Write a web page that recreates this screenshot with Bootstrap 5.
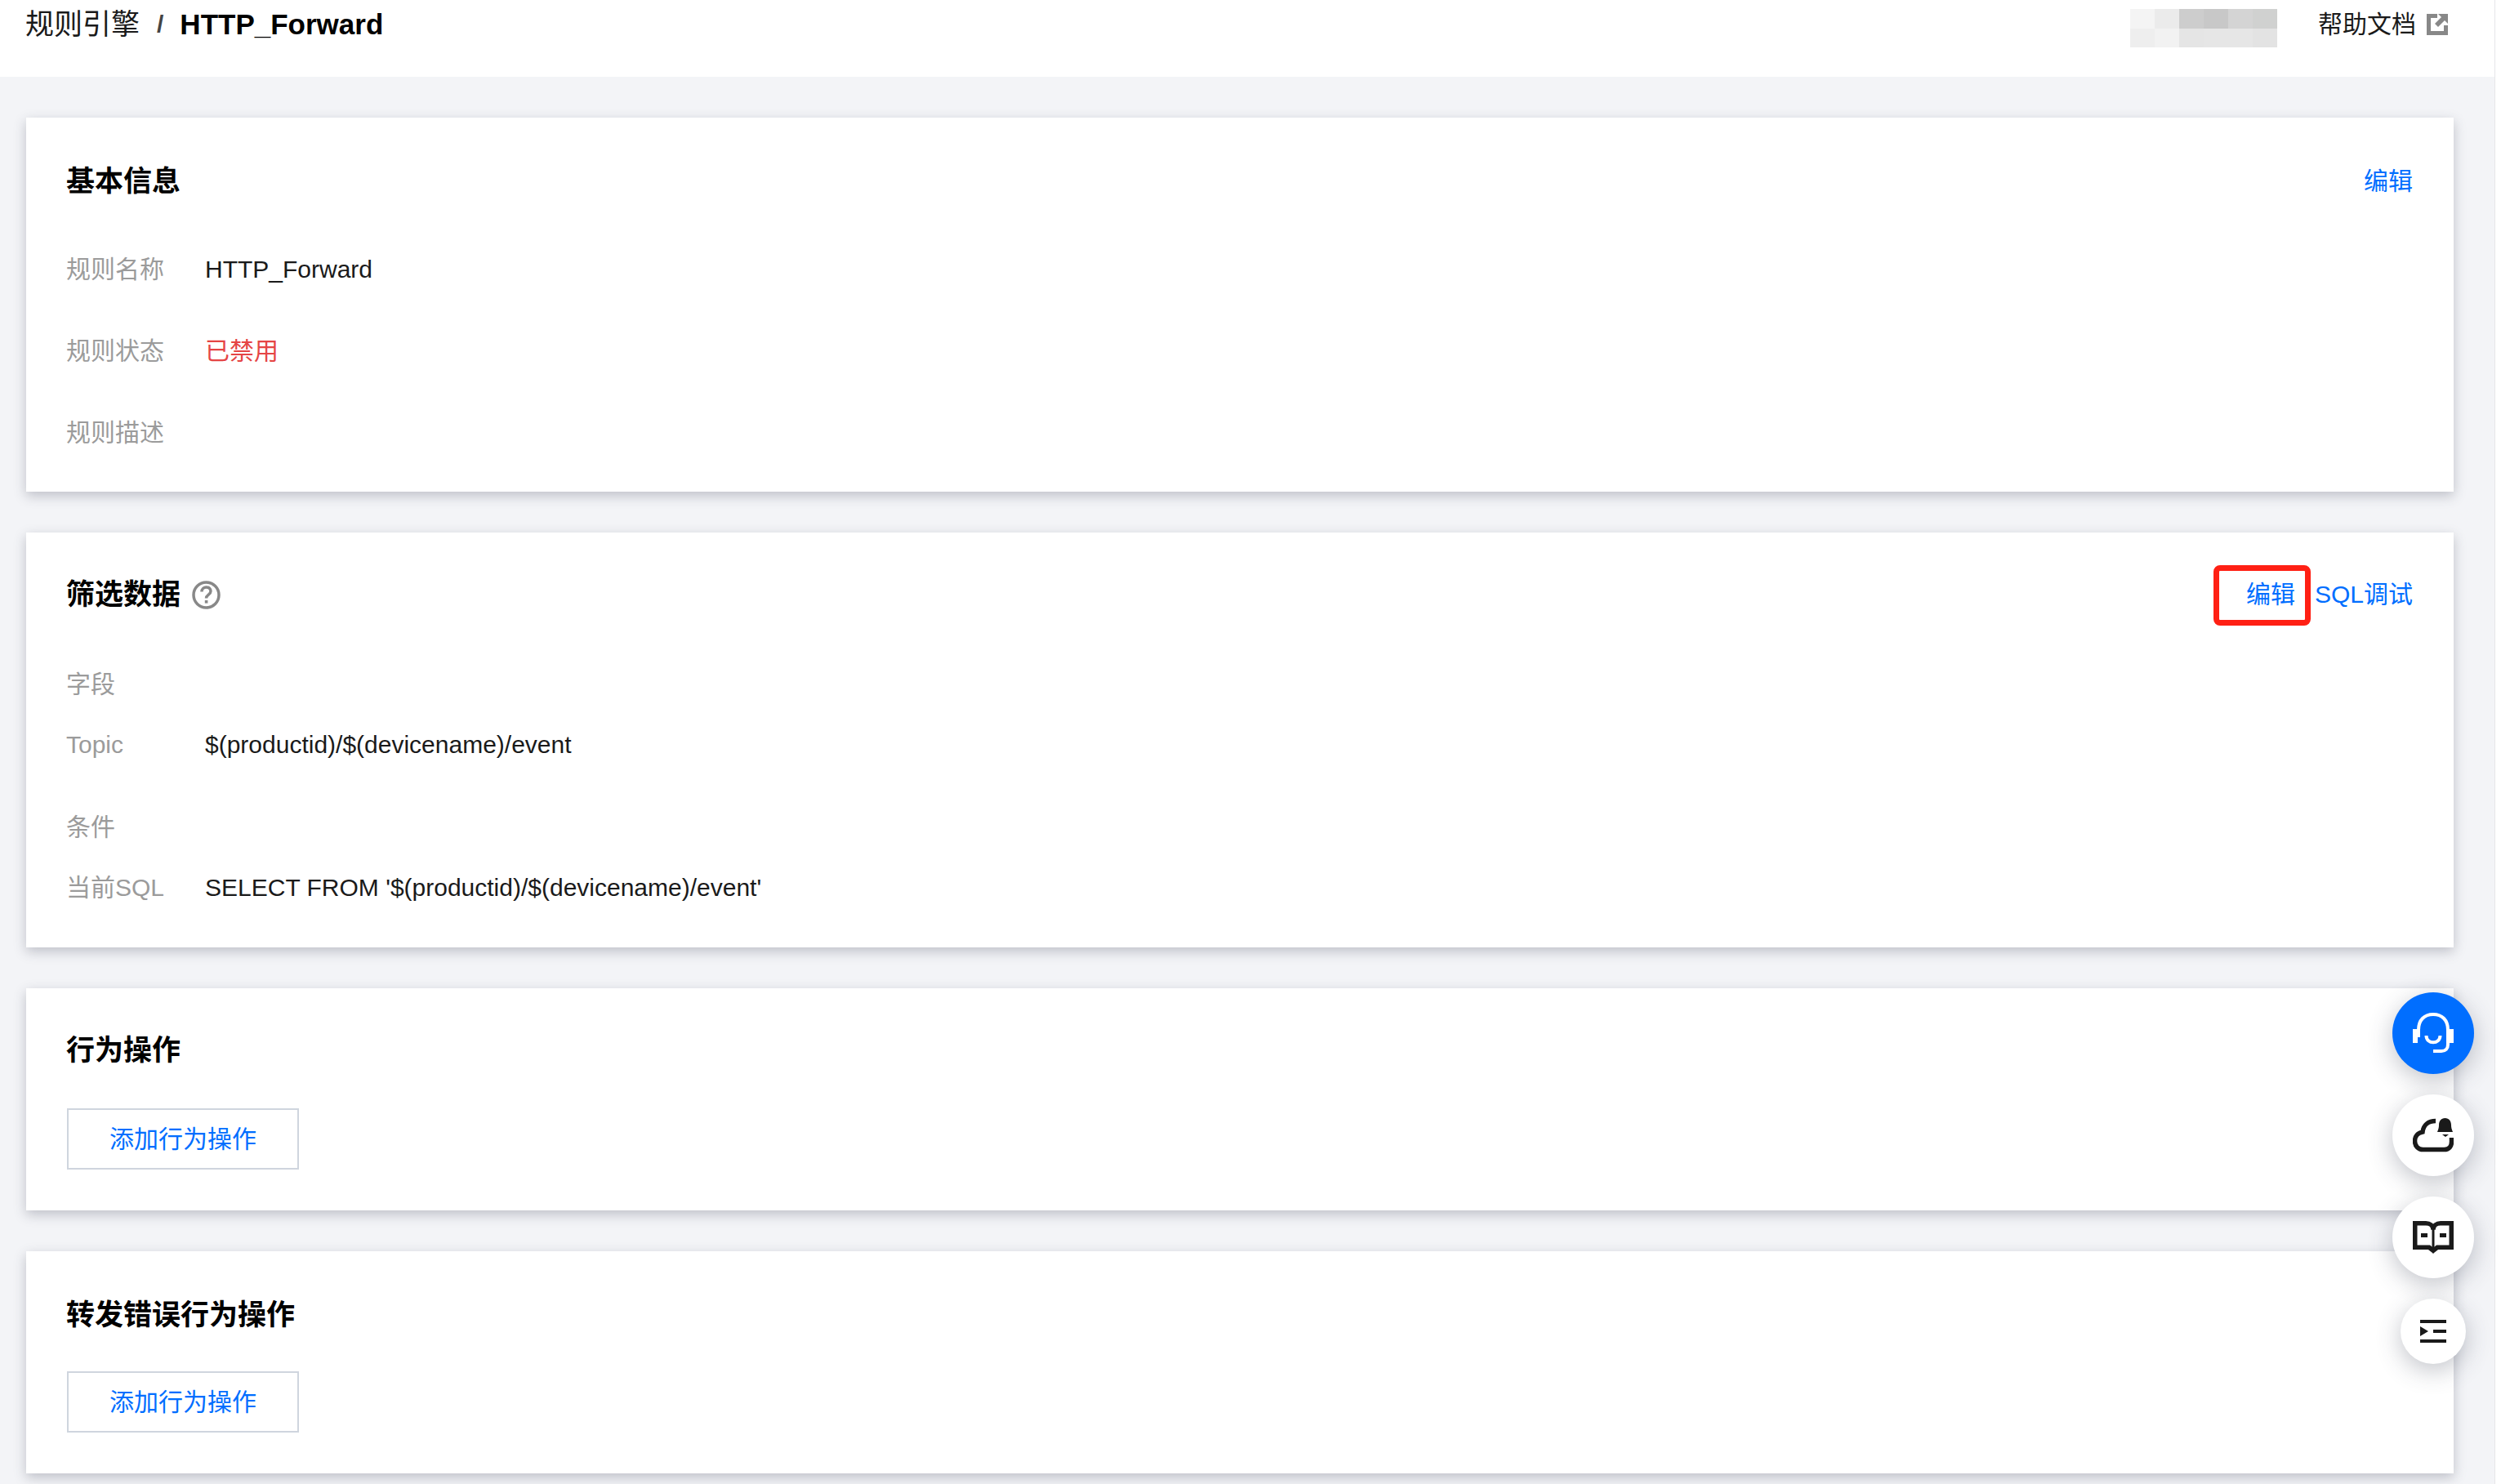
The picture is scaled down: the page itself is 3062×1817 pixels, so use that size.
<!DOCTYPE html>
<html lang="zh-CN">
<head>
<meta charset="utf-8">
<title>规则引擎</title>
<link rel="stylesheet" href="https://cdn.jsdelivr.net/npm/bootstrap@5.3.0/dist/css/bootstrap.min.css">
<style>
html,body{height:100%;overflow:hidden}
body{font-family:"Liberation Sans","Noto Sans CJK SC",sans-serif;font-size:30px;line-height:50px;color:#1a1a1a;background:#fff}
a{text-decoration:none}
.shell{width:3055px;height:1817px;background:#f3f4f7;border-right:1px solid #e6e6e9;overflow:hidden}
.topbar{height:94px;background:#fff;padding:5px 57px 0 31px;align-items:flex-start}
.topbar .breadcrumb{--bs-breadcrumb-margin-bottom:0;--bs-breadcrumb-item-padding-x:20px;--bs-breadcrumb-divider-color:#444;--bs-breadcrumb-item-active-color:#000;font-size:35px;line-height:50px}
.topbar .breadcrumb-item a{color:#1a1a1a}
.topbar .breadcrumb-item.active{font-weight:700;margin-left:1px}
.topbar .breadcrumb-item+.breadcrumb-item::before{font-size:30px}
.mosaic{display:grid;grid-template-columns:repeat(6,30px);grid-auto-rows:23.5px;margin:6px 50px 0 0}
.m1{background:#f4f4f4}.m2{background:#ebebeb}.m3{background:#cdcdcd}.m4{background:#c8c8c8}.m5{background:#d4d4d4}.m6{background:#d0d1d0}
.m7{background:#eee}.m8{background:#f2f2f2}.m9{background:#e5e5e5}.m10{background:#e6e6e6}.m11{background:#e3e3e3}
.helplink{color:#1a1a1a;gap:13px}
.extico{width:26px;height:26px}
.content{padding:50px 50px 0 32px;gap:50px}
.panel.card{--bs-card-border-width:0;--bs-card-border-radius:0;--bs-card-inner-border-radius:0;box-shadow:0 5px 14px rgba(54,58,80,.28);padding:52px 50px 47px}
.panel.card.flt{padding:50px 50px 48px}
.panel-head{height:52px;line-height:52px}
.panel-title{font-size:35px;line-height:52px;font-weight:700;color:#000;margin:0 0 0 -1px}
.tip{width:35px;height:35px;margin-left:14px}
.lnk{color:#006eff}
.info{margin-top:57px;gap:50px}
.info2{margin-top:59px}
.rowline{height:50px}
.lab{width:170px;margin-left:-1px;color:#9b9b9b;flex:none}
.val{color:#1a1a1a}
.off{color:#e54545}
.g24{margin-top:24px}.g25{margin-top:25px}.g51{margin-top:51px}
.act.panel.card{padding-bottom:50px}
.act.first.panel.card{padding-top:50px}
.addbtn.btn{--bs-btn-border-radius:0;--bs-btn-border-width:2px;--bs-btn-border-color:#cfd5de;--bs-btn-color:#006eff;--bs-btn-bg:#fff;--bs-btn-hover-bg:#fff;--bs-btn-hover-color:#006eff;--bs-btn-hover-border-color:#cfd5de;--bs-btn-font-size:30px;--bs-btn-line-height:71px;--bs-btn-padding-x:0;--bs-btn-padding-y:0;width:284px;height:75px;margin-top:43px;display:block}
.first .addbtn.btn{margin-top:45px}
.anchor{position:relative}
.redbox{position:absolute;left:-40px;top:-10px;width:119px;height:74px;border:7px solid #ff2014;border-radius:8px;pointer-events:none}
.floats{position:fixed;left:2929px;top:1215px;width:100px;gap:25px;align-items:center}
.fbtn{width:100px;height:100px;border-radius:50%;background:#fff;box-shadow:0 8px 30px rgba(54,58,80,.3);display:flex;align-items:center;justify-content:center;color:#1a1a1a}
.fbtn.pri{background:#006eff;color:#fff}
.fbtn.sm{width:80px;height:80px}
.fbtn svg{width:50px;height:50px}
</style>
</head>
<body>
<div class="shell">
  <header class="topbar d-flex justify-content-between">
    <nav aria-label="breadcrumb">
      <ol class="breadcrumb">
        <li class="breadcrumb-item"><a href="#">规则引擎</a></li>
        <li class="breadcrumb-item active" aria-current="page">HTTP_Forward</li>
      </ol>
    </nav>
    <div class="d-flex align-items-start">
      <div class="mosaic" aria-hidden="true">
        <i class="m1"></i><i class="m2"></i><i class="m3"></i><i class="m4"></i><i class="m5"></i><i class="m6"></i>
        <i class="m7"></i><i class="m8"></i><i class="m9"></i><i class="m10"></i><i class="m10"></i><i class="m11"></i>
      </div>
      <a class="helplink d-flex align-items-center" href="#">帮助文档
        <svg class="extico" viewBox="0 0 26 26"><path fill="none" stroke="#888" stroke-width="5" d="M13 2.5H2.5v21h21V14"/><path fill="#888" d="M14 0h12v12l-4-4-8 8-4-4 8-8z"/></svg>
      </a>
    </div>
  </header>

  <main class="content d-flex flex-column">
    <section class="panel card">
      <div class="panel-head d-flex justify-content-between align-items-center">
        <h2 class="panel-title">基本信息</h2>
        <a class="lnk" href="#">编辑</a>
      </div>
      <div class="info d-flex flex-column">
        <div class="rowline d-flex"><span class="lab">规则名称</span><span class="val">HTTP_Forward</span></div>
        <div class="rowline d-flex"><span class="lab">规则状态</span><span class="off">已禁用</span></div>
        <div class="rowline d-flex"><span class="lab">规则描述</span></div>
      </div>
    </section>

    <section class="panel card flt">
      <div class="panel-head d-flex justify-content-between align-items-center">
        <div class="d-flex align-items-center">
          <h2 class="panel-title">筛选数据</h2>
          <svg class="tip" viewBox="0 0 35 35"><circle cx="17.5" cy="17.5" r="15.5" fill="none" stroke="#888" stroke-width="3.5"/><path fill="none" stroke="#888" stroke-width="3.5" d="M12 13.5c0-3.4 2.4-5.5 5.6-5.5s5.4 2 5.4 4.8c0 4.4-5.5 4.2-5.5 8.7"/><rect x="15.8" y="24" width="3.6" height="3.6" fill="#888"/></svg>
        </div>
        <div class="d-flex align-items-center">
          <a class="lnk anchor" href="#">编辑<span class="redbox"></span></a>
          <a class="lnk ms-4" href="#">SQL调试</a>
        </div>
      </div>
      <div class="info2">
        <div class="rowline d-flex"><span class="lab">字段</span></div>
        <div class="rowline d-flex g24"><span class="lab">Topic</span><span class="val">$(productid)/$(devicename)/event</span></div>
        <div class="rowline d-flex g51"><span class="lab">条件</span></div>
        <div class="rowline d-flex g24"><span class="lab">当前SQL</span><span class="val">SELECT FROM '$(productid)/$(devicename)/event'</span></div>
      </div>
    </section>

    <section class="panel card act first">
      <div class="panel-head"><h2 class="panel-title">行为操作</h2></div>
      <button type="button" class="addbtn btn btn-outline-primary">添加行为操作</button>
    </section>

    <section class="panel card act">
      <div class="panel-head"><h2 class="panel-title">转发错误行为操作</h2></div>
      <button type="button" class="addbtn btn btn-outline-primary">添加行为操作</button>
    </section>
  </main>
</div>

<div class="floats d-flex flex-column">
  <a class="fbtn pri" href="#" aria-label="客服">
    <svg viewBox="0 0 50 50" fill="none" stroke="currentColor" stroke-width="4">
      <path d="M7 30V21C7 9 14 2 25 2s18 7 18 19v18c0 5-3 8-8 8h-10"/>
      <path d="M17 28c0 11 17 11 17 0" transform="translate(-.5 0)"/>
      <path fill="currentColor" stroke="none" d="M0 20h6v17H0zM44 20h6v17h-6z"/>
    </svg>
  </a>
  <a class="fbtn" href="#" aria-label="消息">
    <svg viewBox="0 0 50 50" fill="none" stroke="currentColor" stroke-width="5.5">
      <path d="M28 7.500c-9 0-15 5-16 13.500C6 22 2.500 26.500 2.500 32c0 6.500 4.500 10.500 10 10.500h26c6 0 9-4 9-9.500v-5"/>
      <path fill="currentColor" stroke="none" d="M39.500 4c5 0 7.500 4 7.500 8.500 0 3 .5 5 2 8.500H30c1.500-3.500 2-5.500 2-8.500C32 8 34.500 4 39.500 4zM36 24h8l-4 3z"/>
    </svg>
  </a>
  <a class="fbtn" href="#" aria-label="文档">
    <svg viewBox="0 0 50 50" fill="none" stroke="currentColor" stroke-width="5.500">
      <path d="M2.750 7.750H16c5 0 9 3 9 8 0-5 4-8 9-8h13.250v29.500H30l-5 4-5-4H2.750z"/>
      <path stroke-width="3" d="M25 14v27"/>
      <path fill="currentColor" stroke="none" d="M10 20h8v5h-8zM33 20h8v5h-8zM22 38h6l-3 7z"/>
    </svg>
  </a>
  <a class="fbtn sm" href="#" aria-label="展开">
    <svg viewBox="0 0 50 50" fill="currentColor">
      <path d="M9 11h32v4H9zM25 23h16v4H25zM9 35h32v4H9zM9 19l10 6-10 6z"/>
    </svg>
  </a>
</div>
<script src="https://cdn.jsdelivr.net/npm/bootstrap@5.3.0/dist/js/bootstrap.bundle.min.js"></script>
</body>
</html>
